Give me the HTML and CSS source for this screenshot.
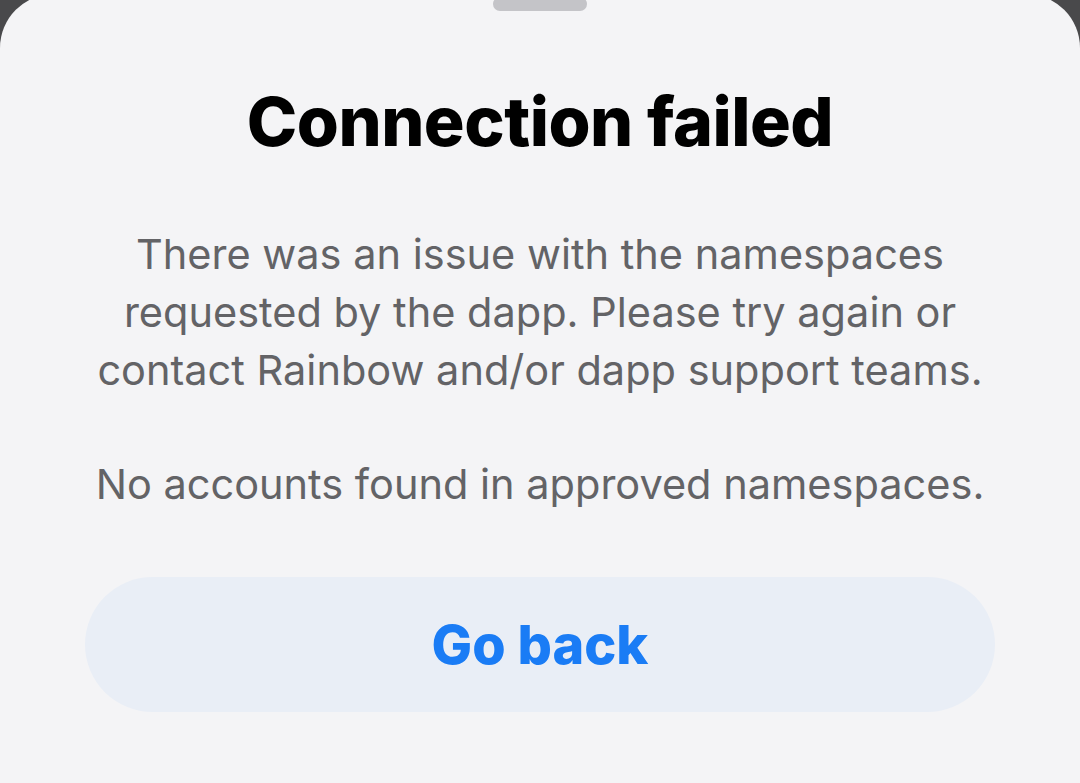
FILE: index.html
```html
<!DOCTYPE html>
<html lang="en">
<head>
<meta charset="utf-8">
<title>Connection failed</title>
<link rel="stylesheet" href="styles.css">
</head>
<body>
<div class="sheet">
  <div class="grabber"></div>
  <h1 class="title">Connection failed</h1>
  <p class="message">There was an issue with the namespaces<br>requested by the dapp. Please try again or<br>contact Rainbow and/or dapp support teams.</p>
  <p class="detail">No accounts found in approved namespaces.</p>
  <button class="back-button" type="button">Go back</button>
</div>
</body>
</html>
```

FILE: styles.css
```css
html, body {
  margin: 0;
  padding: 0;
  height: 100%;
  overflow: hidden;
}
body {
  background: #49494b;
  font-family: Inter, "Noto Sans", sans-serif;
}
.sheet {
  margin-top: -6px;
  height: calc(100% + 6px);
  background: #f4f4f6;
  border-radius: 54px 54px 0 0;
  display: flex;
  flex-direction: column;
  align-items: center;
  box-sizing: border-box;
  padding: 0 85px;
}
.grabber {
  width: 94px;
  height: 14px;
  margin-top: 3px;
  border-radius: 7px;
  background: #c4c4c8;
  flex-shrink: 0;
}
.title {
  margin: 70px 0 0;
  font-size: 68px;
  line-height: 80px;
  font-weight: 800;
  color: #000;
  letter-spacing: -0.5px;
}
.message {
  margin: 64px 0 0;
  font-size: 41.5px;
  line-height: 58px;
  color: #636366;
  text-align: center;
  font-weight: 400;
}
.detail {
  margin: 56px 0 0;
  font-size: 41.5px;
  line-height: 58px;
  color: #636366;
  text-align: center;
}
.back-button {
  margin-top: 64px;
  width: 100%;
  height: 135px;
  border: none;
  border-radius: 68px;
  background: #e9eef6;
  color: #1a7cf5;
  font-family: Inter, "Noto Sans", sans-serif;
  font-size: 54px;
  font-weight: 800;
  flex-shrink: 0;
}
```
